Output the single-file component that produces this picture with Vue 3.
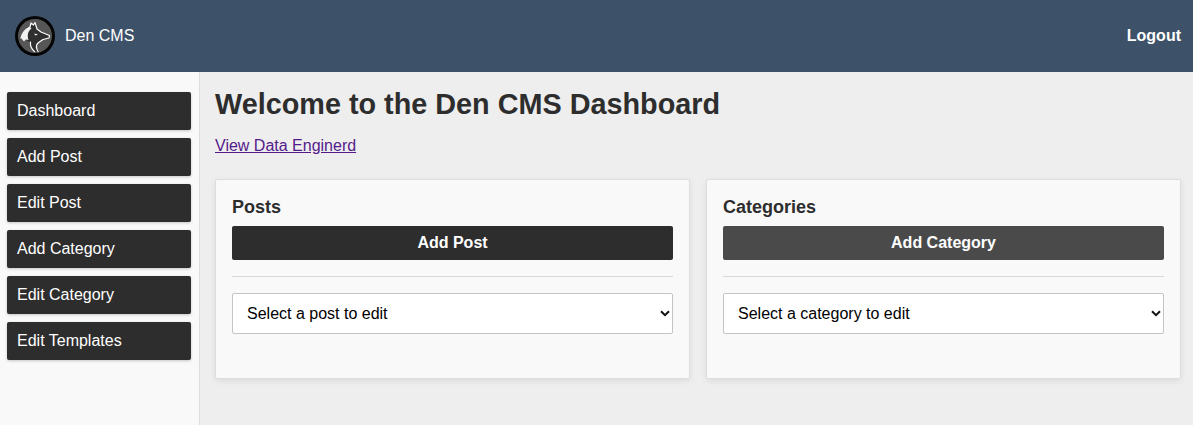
<template>
  <div class="dashboard-page">
    <!-- Header -->
    <header class="top-bar">
      <div class="brand">
        <svg class="brand-logo" width="40" height="40" viewBox="15 16 40 40" xmlns="http://www.w3.org/2000/svg">
          <circle cx="35" cy="36" r="20" fill="#050505" />
          <circle cx="35" cy="36" r="17" fill="#565656" />
          <path
            d="M21 38C22 33 26 29 30 27L31 23L33.500 25L35 22.500L37 29L41 32L49.500 35.500L49 38L43 39.500L38 43C36 45 36 48 38 51.500L34 51C31 48 30 45 30 42L26 40L24 41Z"
            fill="#2f2f2f"
          />
          <path
            d="M21 38C22 33 26 29 30 27L31 23L33.500 25L35 22.500L37 29L41 32L49.500 35.500L49 38L43 39.500L38 43C36 45 36 48 38 51.500"
            fill="none"
            stroke="#fff"
            stroke-width="1.200"
            stroke-linejoin="round"
            stroke-linecap="round"
          />
          <path d="M21 38C22 33 26 29 30 27L31.500 28.500C28 31 27 35 28.500 40L26 39.500L24 41.500Z" fill="#f2f2f2" />
          <path d="M30.500 42C30 46 31.500 49 34.500 51.500" fill="none" stroke="#fff" stroke-width="1.200" stroke-linecap="round" />
          <path d="M34 33.500L38 34.500L35.500 35.500Z" fill="#fff" />
        </svg>
        <span class="brand-name">Den CMS</span>
      </div>
      <a class="logout-link" href="#">Logout</a>
    </header>

    <div class="page-body">
      <!-- Sidebar -->
      <aside class="sidebar">
        <a v-for="item in navItems" :key="item" class="nav-item" href="#">{{ item }}</a>
      </aside>

      <!-- Main content -->
      <main class="content">
        <h1 class="page-title">Welcome to the Den CMS Dashboard</h1>
        <p class="view-line"><a class="view-link" href="#">View Data Enginerd</a></p>

        <div class="card-row">
          <section v-for="card in cards" :key="card.title" class="card">
            <h2 class="card-title">{{ card.title }}</h2>
            <button type="button" class="card-button" :class="{ hovered: card.hovered }">{{ card.action }}</button>
            <hr class="divider" />
            <div class="select-wrap">
              <select class="card-select">
                <option>{{ card.placeholder }}</option>
              </select>
              <svg class="select-arrow" width="10" height="7" viewBox="0 0 10 7" xmlns="http://www.w3.org/2000/svg">
                <path d="M1 1.200L5 5.200L9 1.200" fill="none" stroke="#111" stroke-width="2" />
              </svg>
            </div>
          </section>
        </div>
      </main>
    </div>
  </div>
</template>

<script setup>
const navItems = ['Dashboard', 'Add Post', 'Edit Post', 'Add Category', 'Edit Category', 'Edit Templates']

const cards = [
  { title: 'Posts', action: 'Add Post', placeholder: 'Select a post to edit', hovered: false },
  { title: 'Categories', action: 'Add Category', placeholder: 'Select a category to edit', hovered: true },
]
</script>

<style>
html,
body {
  margin: 0;
  background: #eeeeee;
}
</style>

<style scoped>
.dashboard-page {
  display: flex;
  flex-direction: column;
  min-height: 100vh;
  font-family: 'Liberation Sans', Arial, sans-serif;
  color: #2d2d2d;
}

/* Header */
.top-bar {
  display: flex;
  align-items: center;
  justify-content: space-between;
  height: 72px;
  padding: 0 12px 0 15px;
  background: #3d5168;
  color: #fff;
}

.brand {
  display: flex;
  align-items: center;
  gap: 10px;
}

.brand-logo {
  display: block;
}

.brand-name {
  font-size: 16px;
}

.logout-link {
  color: #fff;
  font-size: 16px;
  font-weight: 700;
  text-decoration: none;
}

/* Sidebar */
.page-body {
  display: flex;
  flex: 1;
}

.sidebar {
  display: flex;
  flex-direction: column;
  flex-shrink: 0;
  gap: 8px;
  width: 184px;
  padding: 20px 8px 20px 7px;
  background: #f9f9f9;
  border-right: 1px solid #dddddd;
}

.nav-item {
  display: flex;
  align-items: center;
  height: 38px;
  padding: 0 10px;
  border-radius: 2px;
  background: #2d2d2d;
  color: #fff;
  font-size: 16px;
  text-decoration: none;
  box-shadow: 0 1px 3px rgba(0, 0, 0, 0.2);
}

/* Main */
.content {
  flex: 1;
  min-width: 0;
  padding: 16px 12px 0 15px;
  background: #eeeeee;
}

.page-title {
  margin: 0;
  font-size: 28.800px;
  line-height: 33px;
  font-weight: 700;
  color: #2d2d2d;
}

.view-line {
  margin: 16px 0 0;
  font-size: 16px;
  line-height: 18px;
}

.view-link {
  color: #551a8b;
}

.card-row {
  display: grid;
  grid-template-columns: 1fr 1fr;
  gap: 16px;
  margin-top: 24px;
}

.card {
  height: 200px;
  box-sizing: border-box;
  padding: 17px 16px 16px;
  background: #f9f9f9;
  border: 1px solid #dddddd;
  border-radius: 2px;
  box-shadow: 0 2px 6px rgba(0, 0, 0, 0.08);
}

.card-title {
  margin: 0 0 8px;
  font-size: 18px;
  line-height: 21px;
  font-weight: 700;
  color: #2d2d2d;
}

.card-button {
  display: block;
  width: 100%;
  height: 34px;
  border: none;
  border-radius: 2px;
  background: #2d2d2d;
  color: #fff;
  font-family: inherit;
  font-size: 16px;
  font-weight: 700;
  cursor: pointer;
}

.card-button.hovered {
  background: #4a4a4a;
}

.divider {
  margin: 16px 0;
  border: none;
  border-top: 1px solid #d8d8d8;
}

.select-wrap {
  position: relative;
}

.card-select {
  display: block;
  width: 100%;
  height: 41px;
  padding: 0 14px;
  border: 1px solid #c4c4c4;
  border-radius: 2px;
  background: #fff;
  color: #000;
  font-family: inherit;
  font-size: 16px;
  appearance: none;
  -webkit-appearance: none;
}

.select-arrow {
  position: absolute;
  top: 17px;
  right: 3px;
  pointer-events: none;
}
</style>
